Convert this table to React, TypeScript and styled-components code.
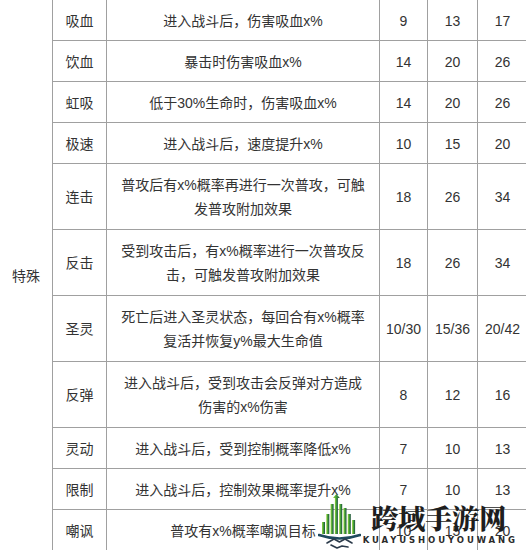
import styled, { createGlobalStyle } from "styled-components"

const GlobalStyle = createGlobalStyle`
  html, body {
    margin: 0;
    padding: 0;
    background: #fff;
  }
  body {
    width: 526px;
    height: 550px;
    overflow: hidden;
    position: relative;
  }
`

type Row = {
  name: string
  desc: string[]
  vals: [string, string, string]
}

const rows: Row[] = [
  { name: "吸血", desc: ["进入战斗后，伤害吸血x%"], vals: ["9", "13", "17"] },
  { name: "饮血", desc: ["暴击时伤害吸血x%"], vals: ["14", "20", "26"] },
  { name: "虹吸", desc: ["低于30%生命时，伤害吸血x%"], vals: ["14", "20", "26"] },
  { name: "极速", desc: ["进入战斗后，速度提升x%"], vals: ["10", "15", "20"] },
  { name: "连击", desc: ["普攻后有x%概率再进行一次普攻，可触", "发普攻附加效果"], vals: ["18", "26", "34"] },
  { name: "反击", desc: ["受到攻击后，有x%概率进行一次普攻反", "击，可触发普攻附加效果"], vals: ["18", "26", "34"] },
  { name: "圣灵", desc: ["死亡后进入圣灵状态，每回合有x%概率", "复活并恢复y%最大生命值"], vals: ["10/30", "15/36", "20/42"] },
  { name: "反弹", desc: ["进入战斗后，受到攻击会反弹对方造成", "伤害的x%伤害"], vals: ["8", "12", "16"] },
  { name: "灵动", desc: ["进入战斗后，受到控制概率降低x%"], vals: ["7", "10", "13"] },
  { name: "限制", desc: ["进入战斗后，控制效果概率提升x%"], vals: ["7", "10", "13"] },
  { name: "嘲讽", desc: ["普攻有x%概率嘲讽目标"], vals: ["10", "15", "20"] },
]

const colWidths = [53, 54, 273, 48, 50, 50]

const Table = styled.table`
  border-collapse: collapse;
  table-layout: fixed;
  width: 528px;
  margin: -1px 0 0 -1px;
  font-family: "Liberation Sans", "Noto Sans CJK SC", sans-serif;
  font-size: 14px;
  color: #333;
`

const Cell = styled.td<{ $tall?: boolean }>`
  border: 1px solid #a0a0a0;
  text-align: center;
  vertical-align: middle;
  padding: 1px 2px 0;
  line-height: 24px;
  height: ${(p) => (p.$tall ? 64 : 39)}px;
  white-space: nowrap;
`

const GroupCell = styled.td`
  border: 1px solid #a0a0a0;
  text-align: center;
  vertical-align: middle;
  padding: 0;
`

const Watermark = styled.div`
  position: absolute;
  right: 11px;
  bottom: 0;
  display: flex;
  align-items: flex-end;
  gap: 2px;
`

const BrandText = styled.div`
  display: flex;
  flex-direction: column;
  align-items: center;
  padding-bottom: 5px;
`

const BrandName = styled.div`
  font-family: "Noto Serif CJK SC", "Noto Sans CJK SC", serif;
  font-weight: 900;
  font-size: 27px;
  line-height: 29px;
  color: #1e1e1e;
`

const BrandPinyin = styled.div`
  font-family: "DejaVu Sans", sans-serif;
  font-weight: 700;
  font-size: 8.5px;
  letter-spacing: 2.9px;
  margin-top: 3px;
  margin-right: -3px;
  color: #2a2a2a;
`

function Logo() {
  const bars = [
    { x: 0, h: 12 },
    { x: 4.3, h: 20 },
    { x: 8.6, h: 30 },
    { x: 12.9, h: 38 },
    { x: 17.2, h: 30 },
    { x: 21.5, h: 26 },
    { x: 25.8, h: 20 },
    { x: 30.1, h: 14 },
  ]
  return (
    <svg width="43" height="56" viewBox="0 0 43 56">
      <defs>
        <linearGradient id="barG" x1="0" y1="0" x2="1" y2="0">
          <stop offset="0" stopColor="#9ad83c" />
          <stop offset="0.5" stopColor="#3f9a3a" />
          <stop offset="1" stopColor="#1d4f3a" />
        </linearGradient>
      </defs>
      <g transform="translate(4 0)" fill="url(#barG)">
        {bars.map((b, i) => (
          <rect key={i} x={b.x} y={40 - b.h} width="3" height={b.h} />
        ))}
        <path d="M11 4 L14.4 0 L17.8 4 Z" />
      </g>
      <path d="M1 41 Q21.5 48 42 41" fill="none" stroke="#1f4a5e" strokeWidth="2.6" strokeLinecap="round" />
      <path
        d="M9 49 L16 45 L21.5 48 L27 45 L34 49 M13 51 L19 54 L24 52 L30 53"
        fill="none"
        stroke="#2b3a4a"
        strokeWidth="1.6"
        strokeLinecap="round"
        strokeLinejoin="round"
      />
    </svg>
  )
}

export default function App() {
  return (
    <>
      <GlobalStyle />
      <Table>
        <colgroup>
          {colWidths.map((w, i) => (
            <col key={i} style={{ width: w }} />
          ))}
        </colgroup>
        <tbody>
          {rows.map((r, i) => {
            const tall = r.desc.length > 1
            return (
              <tr key={r.name}>
                {i === 0 && <GroupCell rowSpan={rows.length}>特殊</GroupCell>}
                <Cell $tall={tall}>{r.name}</Cell>
                <Cell $tall={tall}>
                  {r.desc.map((line, j) => (
                    <div key={j}>{line}</div>
                  ))}
                </Cell>
                {r.vals.map((v, j) => (
                  <Cell key={j} $tall={tall}>{v}</Cell>
                ))}
              </tr>
            )
          })}
        </tbody>
      </Table>
      <Watermark>
        <Logo />
        <BrandText>
          <BrandName>跨域手游网</BrandName>
          <BrandPinyin>KUAYUSHOUYOUWANG</BrandPinyin>
        </BrandText>
      </Watermark>
    </>
  )
}
